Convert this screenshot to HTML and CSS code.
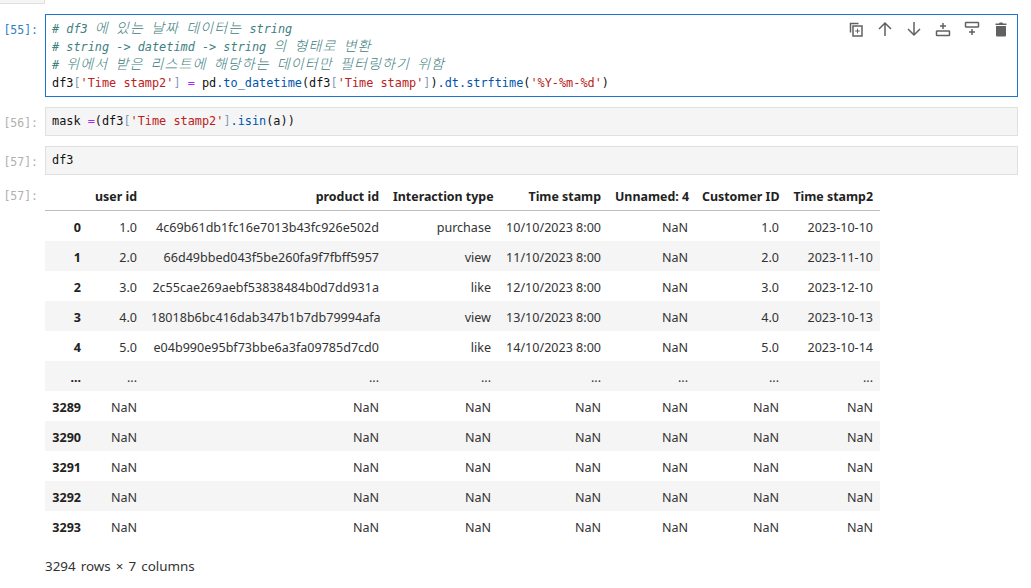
FILE: index.html
```html
<!DOCTYPE html>
<html lang="ko">
<head>
<meta charset="utf-8">
<title>Notebook</title>
<link rel="stylesheet" href="styles.css">
</head>
<body>
<div class="sliver">
  <div class="sliver-left"></div>
  <div class="sliver-code">]</div>
</div>
<div class="cell first">
  <div class="prompt active">[55]:</div>
  <div class="editor focused">
    <div class="line c"># df3 <span class="ko">에</span> <span class="ko">있는</span> <span class="ko">날짜</span> <span class="ko">데이터는</span> string</div>
    <div class="line c"># string -&gt; datetimd -&gt; string <span class="ko">의</span> <span class="ko">형태로</span> <span class="ko">변환</span></div>
    <div class="line c"># <span class="ko">위에서</span> <span class="ko">받은</span> <span class="ko">리스트에</span> <span class="ko">해당하는</span> <span class="ko">데이터만</span> <span class="ko">필터링하기</span> <span class="ko">위함</span></div>
    <div class="line">df3<span class="b">[</span><span class="s">'Time stamp2'</span><span class="b">]</span> <span class="o">=</span> pd<span class="p">.to_datetime</span>(df3<span class="b">[</span><span class="s">'Time stamp'</span><span class="b">]</span>)<span class="p">.dt.strftime</span>(<span class="s">'%Y-%m-%d'</span>)</div>
    <div class="toolbar">
      <svg class="icon" viewBox="0 0 16 16"><path class="st" d="M2.5 11.500V2.500h8"/><path class="st" d="M5 5h9v10H5z"/><path class="st thin" d="M9.500 7.700v4.600M7.200 10h4.600"/></svg>
      <svg class="icon" viewBox="0 0 16 16"><path class="st" d="M8 15V2M2 8l6-6 6 6"/></svg>
      <svg class="icon" viewBox="0 0 16 16"><path class="st" d="M8 1v13M2 8l6 6 6-6"/></svg>
      <svg class="icon" viewBox="0 0 16 16"><rect class="st" x="1.5" y="10" width="13" height="4.5" rx=".6"/><path class="st" d="M8 2v6M5 5h6"/></svg>
      <svg class="icon" viewBox="0 0 16 16"><rect class="st" x="1.5" y="1.5" width="13" height="4.5" rx=".6"/><path class="st" d="M8 8v6M5 11h6"/></svg>
      <svg class="icon" viewBox="0 0 16 16"><path class="fl" d="M3 5h10v9.500a1 1 0 0 1-1 1H4a1 1 0 0 1-1-1zM2.500 2.500H6L6.700 1.500h2.600L10 2.500h3.500V4h-11z"/></svg>
    </div>
  </div>
</div>
<div class="cell">
  <div class="prompt">[56]:</div>
  <div class="editor"><div class="line">mask <span class="o">=</span>(df3<span class="b">[</span><span class="s">'Time stamp2'</span><span class="b">]</span><span class="p">.isin</span>(a))</div></div>
</div>
<div class="cell">
  <div class="prompt">[57]:</div>
  <div class="editor"><div class="line">df3</div></div>
</div>
<div class="output">
  <div class="prompt out">[57]:</div>
  <div class="result">
    <table class="df">
      <thead>
        <tr><th></th><th>user id</th><th>product id</th><th>Interaction type</th><th>Time stamp</th><th>Unnamed: 4</th><th>Customer ID</th><th>Time stamp2</th></tr>
      </thead>
      <tbody>
        <tr><th>0</th><td>1.0</td><td>4c69b61db1fc16e7013b43fc926e502d</td><td>purchase</td><td>10/10/2023 8:00</td><td>NaN</td><td>1.0</td><td>2023-10-10</td></tr>
        <tr><th>1</th><td>2.0</td><td>66d49bbed043f5be260fa9f7fbff5957</td><td>view</td><td>11/10/2023 8:00</td><td>NaN</td><td>2.0</td><td>2023-11-10</td></tr>
        <tr><th>2</th><td>3.0</td><td>2c55cae269aebf53838484b0d7dd931a</td><td>like</td><td>12/10/2023 8:00</td><td>NaN</td><td>3.0</td><td>2023-12-10</td></tr>
        <tr><th>3</th><td>4.0</td><td>18018b6bc416dab347b1b7db79994afa</td><td>view</td><td>13/10/2023 8:00</td><td>NaN</td><td>4.0</td><td>2023-10-13</td></tr>
        <tr><th>4</th><td>5.0</td><td>e04b990e95bf73bbe6a3fa09785d7cd0</td><td>like</td><td>14/10/2023 8:00</td><td>NaN</td><td>5.0</td><td>2023-10-14</td></tr>
        <tr><th>...</th><td>...</td><td>...</td><td>...</td><td>...</td><td>...</td><td>...</td><td>...</td></tr>
        <tr><th>3289</th><td>NaN</td><td>NaN</td><td>NaN</td><td>NaN</td><td>NaN</td><td>NaN</td><td>NaN</td></tr>
        <tr><th>3290</th><td>NaN</td><td>NaN</td><td>NaN</td><td>NaN</td><td>NaN</td><td>NaN</td><td>NaN</td></tr>
        <tr><th>3291</th><td>NaN</td><td>NaN</td><td>NaN</td><td>NaN</td><td>NaN</td><td>NaN</td><td>NaN</td></tr>
        <tr><th>3292</th><td>NaN</td><td>NaN</td><td>NaN</td><td>NaN</td><td>NaN</td><td>NaN</td><td>NaN</td></tr>
        <tr><th>3293</th><td>NaN</td><td>NaN</td><td>NaN</td><td>NaN</td><td>NaN</td><td>NaN</td><td>NaN</td></tr>
      </tbody>
    </table>
    <p class="shape">3294 rows × 7 columns</p>
  </div>
</div>
</body>
</html>
```
FILE: styles.css
```css
* { box-sizing: border-box; }
html, body { margin: 0; padding: 0; height: 100%; overflow: hidden; background: #fff; }
body { font-family: "Noto Sans", "Open Sans", sans-serif; color: #333; }

.sliver { display: flex; height: 4px; overflow: hidden; }
.sliver-left { width: 45px; height: 4px; background: #f5f5f5; border-right: 1px solid #e0e0e0; border-bottom: 1px solid #e0e0e0; }
.sliver-code { margin-left: 102px; margin-top: -14px; font: 11.87px/18px "DejaVu Sans Mono", monospace; color: #05a; }

.cell { display: flex; margin-top: 10px; margin-right: 13px; }
.prompt { width: 45px; flex: none; padding: 7px 7px 0 0; text-align: right; font: 11.5px/18.2px "DejaVu Sans Mono", monospace; color: #b0b0b0; }
.prompt.active { color: #307fc1; }
.prompt.out { padding-top: 6px; }

.editor { position: relative; flex: 1; padding: 4px 6px 5px; background: #f5f5f5; border: 1px solid #e0e0e0; font: 11.87px/18.2px "DejaVu Sans Mono", "Noto Sans CJK KR", monospace; color: #111; }
.editor.focused { background: #fff; border-color: #1976d2; padding-top: 4px; padding-bottom: 4.2px; }
.line { height: 18.2px; white-space: pre; }
.c { color: #408080; font-style: italic; position: relative; top: 0.5px; }
.ko { font-family: "Noto Sans CJK KR", sans-serif; font-size: 14px; letter-spacing: 1.12px; font-weight: 300; line-height: 1; }
.b { color: #7f9cbc; }
.s { color: #ba2121; }
.o { color: #a2f; }
.p { color: #05a; }

.toolbar { position: absolute; top: 6px; right: 8px; display: flex; gap: 13px; }
.icon { width: 16px; height: 16px; display: block; }
.st { fill: none; stroke: #616161; stroke-width: 1.5; }
.thin { stroke-width: 1; }
.fl { fill: #616161; }

.output { display: flex; margin-top: 6px; }
.result { flex: 1; }
.df { border-collapse: separate; border-spacing: 0; table-layout: fixed; width: 835px; font-size: 12.55px; line-height: 19px; color: #333; }
.df th, .df td { padding: 7px 7px 4px; text-align: right; white-space: nowrap; font-weight: 400; }
.df th { font-weight: 700; color: #222; }
.df thead th { border-bottom: 1px solid #bdbdbd; height: 30px; padding: 6px 7px 4px; font-size: 12.4px; }
.df thead th:nth-child(1) { width: 43px; }
.df thead th:nth-child(2) { width: 56px; }
.df thead th:nth-child(3) { width: 242px; }
.df thead th:nth-child(4) { width: 112px; }
.df thead th:nth-child(5) { width: 110px; }
.df thead th:nth-child(6) { width: 87px; }
.df thead th:nth-child(7) { width: 91px; }
.df thead th:nth-child(8) { width: 94px; }
.df tbody tr { height: 30px; }
.df tbody tr:nth-child(even) { background: #f5f5f5; }
.shape { margin: 16px 0 0; font-size: 13.4px; line-height: 19px; word-spacing: 1.6px; }
```
